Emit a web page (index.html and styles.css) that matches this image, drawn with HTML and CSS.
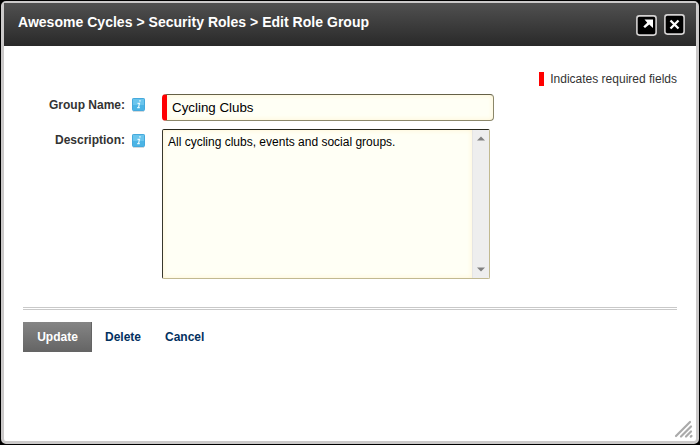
FILE: index.html
```
<!DOCTYPE html>
<html lang="en">
<head>
<meta charset="utf-8">
<title>Edit Role Group</title>
<link rel="stylesheet" href="styles.css">
</head>
<body>
<section class="dialog">
  <header class="titlebar">
    <h1 class="title">Awesome Cycles &gt; Security Roles &gt; Edit Role Group</h1>
    <div class="controls">
      <svg class="expand" width="21" height="21" viewBox="0 0 21 21">
        <rect x=".9" y=".9" width="19.2" height="19.2" rx="2.5" fill="#000" stroke="#d4d2d2" stroke-width="1.6"/>
        <path d="M8.500 4.500h8.500v8.500l-2.500-2.300-1.200-1.200-4.300 3.500-1.700-1.500 3.900-3.700-.5-.8z" fill="#fff"/>
      </svg>
      <svg class="close" width="21" height="21" viewBox="0 0 21 21">
        <rect x=".9" y=".9" width="19.2" height="19.2" rx="2.5" fill="#000" stroke="#d4d2d2" stroke-width="1.6"/>
        <path d="M6.500 6.500l8 8M14.500 6.500l-8 8" stroke="#fff" stroke-width="2.300"/>
      </svg>
    </div>
  </header>
  <main class="content">
    <p class="required-note"><span class="marker"></span><span class="note-text">Indicates required fields</span></p>
    <div class="row name-row">
      <span class="label name-label">Group Name:</span>
      <svg class="info" width="13" height="14" viewBox="0 0 13 14">
        <path d="M1 13.5h11" stroke="#d5dadd"/>
        <rect x=".5" y=".5" width="12" height="12" rx=".7" fill="#6ac5ed" stroke="#45a9dc"/>
        <path d="M1 7h11v5H1z" fill="#4bb4e5"/>
        <path d="M7.2 2.900h1.500M5.500 5.400h2l-1 4.200M5.200 9.700h2.600" fill="none" stroke="#e9faff" stroke-width="1.200"/>
      </svg>
      <div class="input"><span class="input-text">Cycling Clubs</span></div>
    </div>
    <div class="row description-row">
      <span class="label description-label">Description:</span>
      <svg class="info description-info" width="13" height="14" viewBox="0 0 13 14">
        <path d="M1 13.5h11" stroke="#d5dadd"/>
        <rect x=".5" y=".5" width="12" height="12" rx=".7" fill="#6ac5ed" stroke="#45a9dc"/>
        <path d="M1 7h11v5H1z" fill="#4bb4e5"/>
        <path d="M7.2 2.900h1.500M5.500 5.400h2l-1 4.200M5.200 9.700h2.600" fill="none" stroke="#e9faff" stroke-width="1.200"/>
      </svg>
      <div class="textarea">
        <div class="textarea-body"><span class="area-text">All cycling clubs, events and social groups.</span></div>
        <div class="scrollbar">
          <svg width="8" height="5" viewBox="0 0 8 5"><path d="M0 4.5L4 .5l4 4z" fill="#808080"/></svg>
          <svg width="8" height="5" viewBox="0 0 8 5"><path d="M0 .5h8l-4 4z" fill="#808080"/></svg>
        </div>
      </div>
    </div>
    <div class="divider"></div>
    <nav class="actions">
      <span class="update"><span class="update-text">Update</span></span>
      <span class="link delete">Delete</span>
      <span class="link cancel">Cancel</span>
    </nav>
  </main>
  <svg class="grip" width="22" height="21" viewBox="0 0 22 21">
    <path d="M2 16L16 2M7 16.500L17 6.500M12 16.500L17 11.500M16.800 16.500L17.500 16" fill="none" stroke="#aaa" stroke-width="2.200" stroke-linecap="round"/>
  </svg>
</section>
</body>
</html>
```
FILE: styles.css
```
* { box-sizing: border-box; }

body {
  margin: 0;
  width: 700px;
  height: 445px;
  padding: 1px;
  overflow: hidden;
  background: #000;
  font-family: "Liberation Sans", Arial, sans-serif;
  font-size: 12px;
  color: #333;
}

.dialog {
  position: relative;
  height: 443px;
  border: 3px solid #cbc9c9;
  border-top-width: 2px;
  border-radius: 5px;
  background: #fff;
}

.titlebar {
  display: flex;
  justify-content: space-between;
  height: 43px;
  padding: 0 11px 0 14px;
  background: linear-gradient(#505050, #292929);
}

.title {
  margin: 11px 0 0;
  font-size: 14px;
  line-height: 16px;
  font-weight: bold;
  letter-spacing: 0.025px;
  color: #fff;
  white-space: nowrap;
}

.controls { display: flex; gap: 7px; }
.expand { margin-top: 12px; }
.close { margin-top: 11px; }

.content { padding: 25px 19px 0; }

.required-note {
  display: flex;
  align-items: center;
  justify-content: flex-end;
  height: 16px;
  margin: 0;
}

.marker {
  width: 5px;
  height: 14px;
  margin-right: 6px;
  background: #f00;
}

.note-text { white-space: nowrap; }

.row {
  display: flex;
  align-items: flex-start;
}

.name-row { margin-top: 7px; }
.description-row { margin-top: 8px; }

.label {
  width: 102px;
  margin-top: 4px;
  line-height: 14px;
  font-weight: bold;
  text-align: right;
  white-space: nowrap;
}

.info { margin: 4px 17px 0 7px; }
.description-info { margin-top: 5px; }

.input {
  width: 332px;
  height: 27px;
  padding: 5px 0 0 5px;
  border: 1px solid #8b876a;
  border-top-color: #656147;
  border-left: 5px solid #f00;
  border-radius: 4px;
  background: #fffff5;
  box-shadow: inset 0 0 5px #fff3cf;
  color: #000;
  font-size: 13.333px;
  line-height: 16px;
}

.textarea {
  display: flex;
  width: 328px;
  height: 150px;
  border: 1px solid #c1b991;
  border-top-color: #29291f;
  border-left-color: #38382e;
  border-radius: 2px;
  overflow: hidden;
  background: #fffff5;
  color: #000;
}

.textarea-body {
  flex: 1;
  padding: 5px;
  line-height: 14px;
  box-shadow: inset 0 0 5px #fff3cf;
}

.scrollbar {
  display: flex;
  flex-direction: column;
  align-items: center;
  justify-content: space-between;
  width: 17px;
  padding: 6px 0;
  border-left: 1px solid #e5e5e5;
  background: #eee;
}

.divider {
  height: 3px;
  margin-top: 28px;
  border-top: 1px solid #c9c9c9;
  border-bottom: 1px solid #c9c9c9;
}

.actions {
  display: flex;
  align-items: center;
  height: 30px;
  margin-top: 12px;
  font-weight: bold;
}

.update {
  width: 69px;
  height: 30px;
  padding: 8px 0 0 1px;
  border-right: 1px solid #646464;
  background: linear-gradient(#858585, #646464);
  color: #fff;
  line-height: 14px;
  text-align: center;
}

.link { color: #03315f; line-height: 14px; }
.delete { width: 60px; margin-left: 13px; }

.grip {
  position: absolute;
  right: 0;
  bottom: 0;
}
```
